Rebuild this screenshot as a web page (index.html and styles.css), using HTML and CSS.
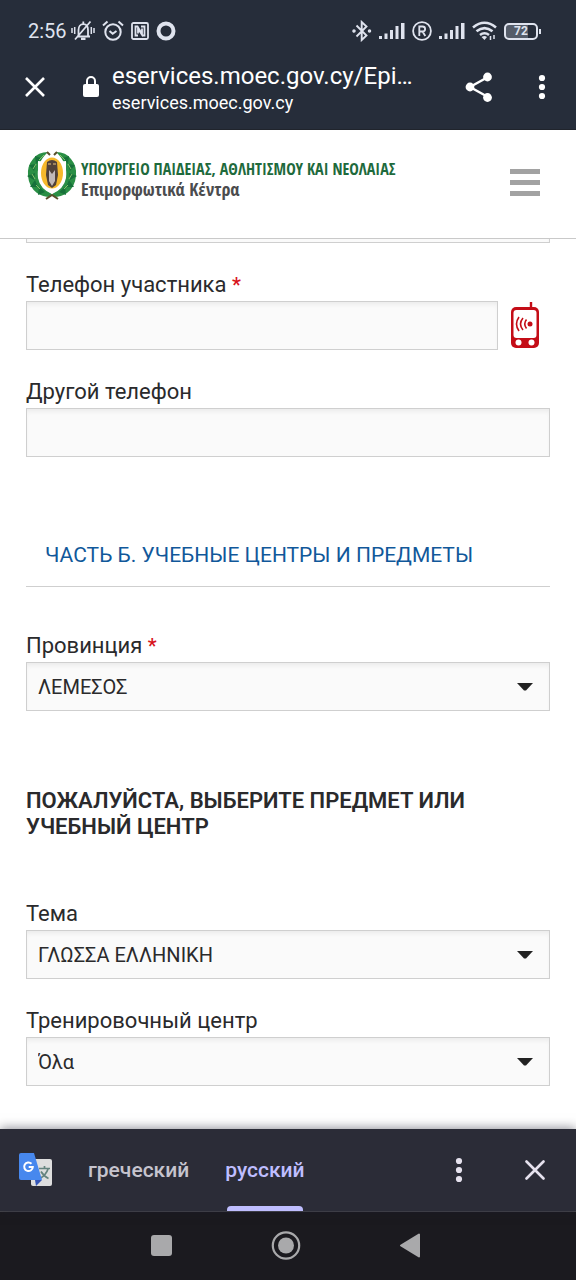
FILE: index.html
```html
<!DOCTYPE html>
<html lang="ru">
<head>
<meta charset="utf-8">
<meta name="viewport" content="width=device-width, initial-scale=1">
<title>Επιμορφωτικά Κέντρα</title>
<link rel="stylesheet" href="styles.css">
</head>
<body>
<div class="browser">
  <div class="status-bar">
    <div class="status-left">
      <span class="clock">2:56</span>
      <svg width="24" height="22" viewBox="0 0 24 22" fill="none" stroke="currentColor" stroke-width="1.8">
        <path d="M6 16.500h13M7.500 16V10c0-3.400 1.900-5.800 4.800-5.800s4.700 2.400 4.700 5.800v6M12.300 4V1.500M4 19.500L19.500 1.500"/>
        <path d="M10 18.800h4.500" stroke-width="2.400"/><path d="M1 8v5M3.700 7v7M20.300 7v7M23 8v5" stroke-width="1.500"/>
      </svg>
      <svg width="22" height="22" viewBox="0 0 22 22" fill="none" stroke="currentColor" stroke-width="2">
        <circle cx="11" cy="12" r="7.700"/><path d="M1 5.500L5.500 1.500M21 5.500L16.500 1.500M7.500 11l3.200 2.800L14.500 11"/>
      </svg>
      <svg width="18" height="18" viewBox="0 0 18 18" fill="none" stroke="currentColor" stroke-width="1.800">
        <rect x="1" y="1" width="16" height="16" rx="1.500"/><path d="M7 13.500H4.500v-9h2L11 12V6.500M10 4.500h3.500v9h-2L7 6.500v5"/>
      </svg>
      <svg width="20" height="20" viewBox="0 0 20 20" fill="none" stroke="currentColor" stroke-width="4"><circle cx="10" cy="10" r="7.500"/></svg>
    </div>
    <div class="status-right">
      <svg width="20" height="22" viewBox="0 0 20 22" fill="none" stroke="currentColor" stroke-width="1.900">
        <path d="M4.500 5.500L14.500 15.500 9.700 20V2l4.800 4.500L4.500 16.500"/><circle cx="2" cy="11" r=".8"/><circle cx="17.500" cy="11" r=".8"/>
      </svg>
      <svg width="26" height="18" viewBox="0 0 26 18" fill="currentColor"><path d="M0 14h3v3H0zM5.500 11.500h3V17h-3zM11 8h3v9h-3zM16.500 4h3v13h-3zM22 1h3.500v16H22z"/></svg>
      <svg width="20" height="20" viewBox="0 0 20 20" fill="none" stroke="currentColor" stroke-width="1.800">
        <circle cx="10" cy="10" r="8.900"/><path d="M7.300 15V5.500h3.200c3.500 0 3.500 5 0 5H7.300M10.500 10.500L13.300 15"/>
      </svg>
      <svg width="26" height="18" viewBox="0 0 26 18" fill="currentColor"><path d="M0 14h3v3H0zM5.500 11.500h3V17h-3zM11 8h3v9h-3zM16.500 4h3v13h-3zM22 1h3.500v16H22z"/></svg>
      <svg width="25" height="20" viewBox="0 0 25 20" fill="none" stroke="currentColor" stroke-width="2.600">
        <path d="M1 6.500Q12.500-3 24 6.500M4.500 10.300q8-6.500 16 0M8 14q4.500-3.500 9 0"/><path d="M9.500 16l3 3 2.500-3q-2.500-2-5.500 0z" fill="currentColor" stroke="none"/><path d="M18.500 19v-4M22 14v4" stroke-width="1.500"/>
      </svg>
      <span class="battery"><span class="battery-level">72</span></span>
    </div>
  </div>

  <div class="toolbar">
    <button class="icon-button" type="button" aria-label="Закрыть">
      <svg width="20" height="20" viewBox="0 0 20 20" fill="none" stroke="currentColor" stroke-width="2.600"><path d="M1 1l18 18M19 1L1 19"/></svg>
    </button>
    <svg class="lock" width="16" height="22" viewBox="0 0 16 22"><rect y="8" width="16" height="13" rx="2" fill="currentColor"/><path d="M4 9V5a4 4 0 0 1 8 0v4" fill="none" stroke="currentColor" stroke-width="2"/></svg>
    <div class="address">
      <div class="address-title">eservices.moec.gov.cy/Epi…</div>
      <div class="address-host">eservices.moec.gov.cy</div>
    </div>
    <button class="icon-button" type="button" aria-label="Поделиться">
      <svg width="28" height="30" viewBox="0 0 28 30" fill="currentColor"><path d="M23 5L5 15l18 10" fill="none" stroke="currentColor" stroke-width="2.400"/><circle cx="22.500" cy="5" r="4.400"/><circle cx="5" cy="15" r="4.400"/><circle cx="22.500" cy="25.500" r="4.400"/></svg>
    </button>
    <button class="icon-button more" type="button" aria-label="Меню">
      <svg width="8" height="26" viewBox="0 0 8 26" fill="currentColor"><circle cx="4" cy="4" r="3.100"/><circle cx="4" cy="13" r="3.100"/><circle cx="4" cy="22" r="3.100"/></svg>
    </button>
  </div>
</div>

<header class="site-header">
  <a class="brand" href="#">
    <svg width="50" height="50" viewBox="0 0 50 50">
      <g fill="#2a8f45">
        <path d="M21 1Q11 1 6 8 0 15 1 25q1 11 9 17 6 4 13 4l2-3Q13 38 11 27 9 12 21 1z"/>
        <path d="M29 1q10 0 15 7 6 7 5 17-1 11-9 17-6 4-13 4l-2-3q12-5 14-16Q41 12 29 1z"/>
      </g>
      <g fill="#17713a">
        <path d="M8 5l1 8 5-6zM2 14l5 6 2-7zM0 25l7 4 1-7zM3 36l8 0-3-7zM11 44l7-3-6-5z"/>
        <path d="M42 5l-1 8-5-6zM48 14l-5 6-2-7zM50 25l-7 4-1-7zM47 36l-8 0 3-7zM39 44l-7-3 6-5z"/>
      </g>
      <g fill="none" stroke="#86c06a" stroke-width="1"><path d="M17 4l-5 5M9 13l-3 5M5 23l3 5M9 34l4 4M33 4l5 5M41 13l3 5M45 23l-3 5M41 34l-4 4"/></g>
      <path d="M19 48l6-4 6 4M20 1l3 3M30 1l-3 3" stroke="#59502a" stroke-width="2" fill="none"/>
      <path d="M11 10q8 1 14-5 6 6 14 5v14q-1 12-14 19-13-7-14-19z" fill="#fff"/>
      <ellipse cx="25" cy="22" rx="11" ry="15.500" fill="#f6b92c"/>
      <path d="M20 11q5-4 10 0l1 13-2 10-4 3-4-3-2-10z" fill="#51423a"/>
      <path d="M22 19l3 4 3-4v11l-3 5-3-5z" fill="#c0b8b8"/><path d="M21 13h3M26 13h3" stroke="#b99a68" stroke-width="1.500"/>
    </svg>
    <span class="brand-text">
      <span class="brand-ministry">ΥΠΟΥΡΓΕΙΟ ΠΑΙΔΕΙΑΣ, ΑΘΛΗΤΙΣΜΟΥ ΚΑΙ ΝΕΟΛΑΙΑΣ</span>
      <span class="brand-name">Επιμορφωτικά Κέντρα</span>
    </span>
  </a>
  <button class="menu-button" type="button" aria-label="Навигация"><span></span><span></span><span></span></button>
</header>

<main class="content">
  <form class="form">
    <input class="input input-scrolled" type="text" aria-label="Адрес">

    <div class="field">
      <label class="label" for="phone">Телефон участника <span class="required">*</span></label>
      <div class="phone-row">
        <input class="input" id="phone" type="tel">
        <svg width="28" height="48" viewBox="0 0 28 48">
          <path d="M20 1v8" stroke="#c40d17" stroke-width="2.400"/>
          <rect y="6" width="28" height="41" rx="5" fill="#c40d17"/><rect x="2.500" y="9" width="23" height="28" rx="3" fill="#fff"/>
          <circle cx="7.500" cy="41.500" r="3" fill="#fff"/><circle cx="20.500" cy="41.500" r="3" fill="#fff"/>
          <circle cx="19" cy="23" r="2.500" fill="#c40d17"/>
          <path d="M8 16q-5 7 0 14M12 17q-5 6 0 12M15.500 18.500q-3.500 4.500 0 9" fill="none" stroke="#c40d17" stroke-width="1.600"/>
        </svg>
      </div>
    </div>

    <div class="field">
      <label class="label" for="phone2">Другой телефон</label>
      <input class="input" id="phone2" type="tel">
    </div>

    <h2 class="section-title">ЧАСТЬ Б. УЧЕБНЫЕ ЦЕНТРЫ И ПРЕДМЕТЫ</h2>

    <div class="field">
      <label class="label" for="province">Провинция <span class="required">*</span></label>
      <div class="select">
        <select class="input" id="province"><option>ΛΕΜΕΣΟΣ</option></select>
        <svg class="arrow" width="16" height="8" viewBox="0 0 16 8"><path d="M0 0h16L9 7.500H7z" fill="#222"/></svg>
      </div>
    </div>

    <h3 class="prompt">ПОЖАЛУЙСТА, ВЫБЕРИТЕ ПРЕДМЕТ ИЛИ УЧЕБНЫЙ ЦЕНТР</h3>

    <div class="field">
      <label class="label" for="subject">Тема</label>
      <div class="select">
        <select class="input" id="subject"><option>ΓΛΩΣΣΑ ΕΛΛΗΝΙΚΗ</option></select>
        <svg class="arrow" width="16" height="8" viewBox="0 0 16 8"><path d="M0 0h16L9 7.500H7z" fill="#222"/></svg>
      </div>
    </div>

    <div class="field">
      <label class="label" for="center">Тренировочный центр</label>
      <div class="select">
        <select class="input" id="center"><option>Όλα</option></select>
        <svg class="arrow" width="16" height="8" viewBox="0 0 16 8"><path d="M0 0h16L9 7.500H7z" fill="#222"/></svg>
      </div>
    </div>
  </form>
</main>

<div class="translate-bar">
  <svg width="34" height="34" viewBox="0 0 34 34">
    <rect x="12" y="6" width="21" height="27" rx="2" fill="#dedede"/>
    <path d="M17 33l6-6-7 0z" fill="#3556b8"/>
    <path d="M20 15.500h11M25.500 13v2.500M29 16q-2 6-8 9.500M22 18.500q3 5 7.500 7" fill="none" stroke="#64837e" stroke-width="1.700"/>
    <path d="M2 0h13l8 27H2q-2 0-2-2V2q0-2 2-2z" fill="#4788ee"/>
    <path d="M12.500 10.700a4.300 4.300 0 1 0 1.300 3.300H9.700" fill="none" stroke="#fff" stroke-width="2"/>
  </svg>
  <div class="tabs">
    <button class="tab" type="button">греческий</button>
    <button class="tab tab-active" type="button">русский</button>
  </div>
  <button class="icon-button" type="button" aria-label="Параметры перевода">
    <svg width="8" height="26" viewBox="0 0 8 26" fill="currentColor"><circle cx="4" cy="4" r="3.100"/><circle cx="4" cy="13" r="3.100"/><circle cx="4" cy="22" r="3.100"/></svg>
  </button>
  <button class="icon-button dismiss" type="button" aria-label="Закрыть перевод">
    <svg width="20" height="20" viewBox="0 0 20 20" fill="none" stroke="currentColor" stroke-width="2.600" stroke-linecap="round"><path d="M1.500 1.500l17 17M18.500 1.500l-17 17"/></svg>
  </button>
</div>

<nav class="system-nav">
  <button class="icon-button" type="button" aria-label="Недавние"><svg width="30" height="30" viewBox="0 0 30 30"><rect x="4" y="4" width="21" height="21" rx="3" fill="currentColor"/></svg></button>
  <button class="icon-button" type="button" aria-label="Домой"><svg width="30" height="30" viewBox="0 0 30 30"><circle cx="15" cy="14.500" r="13.200" fill="none" stroke="currentColor" stroke-width="2.200"/><circle cx="15" cy="14.500" r="8" fill="currentColor"/></svg></button>
  <button class="icon-button" type="button" aria-label="Назад"><svg width="30" height="30" viewBox="0 0 30 30"><path d="M6 14.500L24 3.500v22z" fill="currentColor" stroke="currentColor" stroke-width="2" stroke-linejoin="round"/></svg></button>
</nav>
</body>
</html>
```

FILE: styles.css
```css
* {
  box-sizing: border-box;
}

body {
  display: flex;
  flex-direction: column;
  min-height: 100vh;
  margin: 0;
  background: #fff;
  color: #2a2a2c;
  font-family: Roboto, "Noto Sans", sans-serif;
  font-size: 22px;
  line-height: 26px;
}

svg {
  display: block;
  flex: none;
}

.icon-button {
  flex: none;
  padding: 0;
  border: 0;
  background: none;
  color: inherit;
}

.browser {
  background: #262d3a;
  color: #fff;
  border-bottom: 1px solid #20242c;
}

.status-bar {
  display: flex;
  justify-content: space-between;
  align-items: center;
  padding: 18px 35px 0 28px;
  color: #dfe3ee;
}

.status-left,
.status-right {
  display: flex;
  align-items: center;
  height: 26px;
  gap: 7px;
}

.clock {
  margin-right: -3px;
  font-size: 20px;
}

.battery {
  display: flex;
  align-items: center;
}

.battery::after {
  content: "";
  width: 2px;
  height: 5px;
  margin-left: 1px;
  background: currentColor;
}

.battery-level {
  width: 34px;
  height: 17px;
  border: 2px solid currentColor;
  border-radius: 5px;
  background: linear-gradient(90deg, #555c69 72%, transparent 72%);
  font-size: 12px;
  font-weight: 700;
  line-height: 13px;
  text-align: center;
}

.toolbar {
  display: flex;
  align-items: center;
  height: 85px;
  padding: 0 30px 0 25px;
}

.lock {
  margin: 0 13px 0 38px;
}

.address {
  flex: 1;
  min-width: 0;
  padding-top: 2px;
  white-space: nowrap;
}

.address-title {
  font-size: 24px;
  line-height: 30px;
}

.address-host {
  font-size: 18px;
  line-height: 24px;
}

.more {
  margin-left: 45px;
}

.site-header {
  display: flex;
  justify-content: space-between;
  align-items: flex-start;
  height: 109px;
  padding: 21px 36px 0 27px;
  border-bottom: 1px solid #c9c9c9;
  background: #fff;
  z-index: 1;
}

.brand {
  display: flex;
  gap: 4px;
  color: #4b4c4e;
  text-decoration: none;
}

.brand-text {
  display: flex;
  flex-direction: column;
  padding-top: 8px;
  font-family: "Open Sans Condensed", "Roboto Condensed", "Open Sans", sans-serif;
  font-size: 16px;
  line-height: 20px;
  white-space: nowrap;
}

.brand-ministry {
  color: #1e6a3c;
  font-weight: 700;
}

.brand-name {
  font-size: 18px;
  font-weight: 300;
}

.menu-button {
  display: flex;
  flex-direction: column;
  gap: 6px;
  width: 30px;
  margin-top: 18px;
  padding: 0;
  border: 0;
  background: none;
}

.menu-button span {
  height: 5px;
  background: #a2a2a2;
}

.content {
  flex: 1;
  overflow: hidden;
  padding: 0 26px 42px;
}

.form {
  display: flex;
  flex-direction: column;
}

.field {
  display: flex;
  flex-direction: column;
  gap: 3px;
  margin-top: 29px;
}

.input {
  width: 100%;
  height: 49px;
  margin: 0;
  padding: 1px 11px 0;
  border: 1px solid #cfcfcf;
  border-radius: 0;
  background: #fafafa;
  box-shadow: inset 0 4px 5px -2px #e9e9e9;
  color: #2a2a2c;
  font: 20px/26px Roboto, "Noto Sans", sans-serif;
  appearance: none;
}

.input-scrolled {
  margin-top: -45px;
}

.required {
  color: #d8141c;
  font-size: 20px;
  font-weight: 500;
}

.phone-row {
  display: flex;
  gap: 13px;
  padding-right: 11px;
}

.phone-row .input {
  flex: 1;
  min-width: 0;
}

.section-title {
  margin: 85px 0 17px;
  padding: 0 19px 18px;
  border-bottom: 1px solid #cfcfcf;
  color: #11589a;
  font-size: 21px;
  font-weight: 400;
}

.select {
  display: grid;
  align-items: center;
}

.select > * {
  grid-area: 1 / 1;
}

.arrow {
  justify-self: end;
  margin-right: 17px;
  pointer-events: none;
}

.prompt {
  margin: 77px 0 32px;
  font-size: 22px;
  font-weight: 600;
}

.translate-bar {
  display: flex;
  align-items: center;
  height: 82px;
  padding: 0 31px 0 19px;
  background: #2b2c37;
  box-shadow: 0 -1px 10px rgba(30, 30, 45, 0.5);
  color: #e6e2ee;
  z-index: 1;
}

.tabs {
  display: flex;
  flex: 1;
  align-self: stretch;
  gap: 36px;
  margin-left: 35px;
}

.tab {
  position: relative;
  padding: 0;
  border: 0;
  background: none;
  color: #c6c4ce;
  font: 500 21px/26px Roboto, "Noto Sans", sans-serif;
}

.tab-active {
  color: #bfbeff;
}

.tab-active::after {
  content: "";
  position: absolute;
  right: 2px;
  bottom: 0;
  left: 2px;
  height: 5px;
  border-radius: 4px 4px 0 0;
  background: #bfbeff;
}

.dismiss {
  margin-left: 62px;
}

.system-nav {
  display: flex;
  justify-content: center;
  align-items: center;
  gap: 94px;
  height: 69px;
  padding-right: 4px;
  border-top: 1px solid #46464c;
  background: #1b1a1f;
  color: #a9a9ab;
}
```
